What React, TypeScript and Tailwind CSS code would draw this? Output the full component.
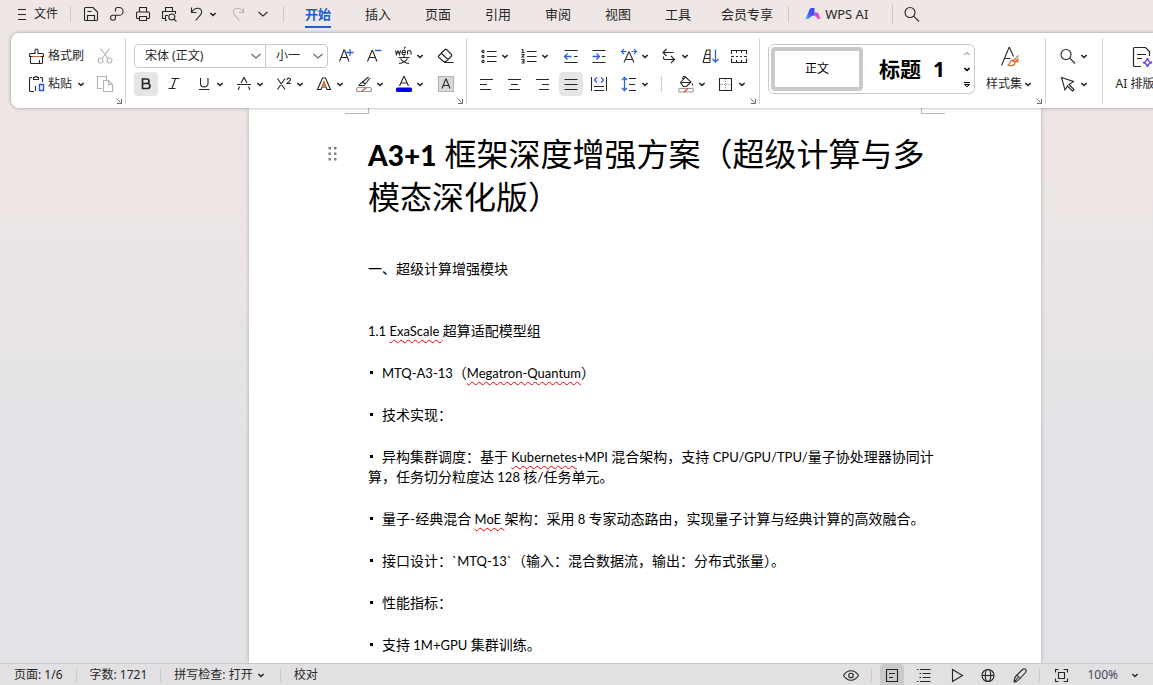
import type { ReactNode } from 'react';
import clsx from 'clsx';

const tabs = ['开始', '插入', '页面', '引用', '审阅', '视图', '工具', '会员专享'];

function Icon({ children, className = 'size-5' }: { children: ReactNode; className?: string }) {
    return (
        <svg viewBox="0 0 20 20" className={clsx('shrink-0', className)} fill="none" stroke="currentColor" strokeWidth="1.1" aria-hidden="true">
            {children}
        </svg>
    );
}

function Caret({ className = '' }: { className?: string }) {
    return (
        <svg viewBox="0 0 12 12" className={clsx('size-3 shrink-0', className)} fill="none" stroke="currentColor" strokeWidth="1.5" aria-hidden="true">
            <path d="M3.3 5L6 7.4 8.7 5" />
        </svg>
    );
}

function Chevron({ className = '' }: { className?: string }) {
    return (
        <svg viewBox="0 0 12 12" className={clsx('size-3 shrink-0', className)} fill="none" stroke="currentColor" strokeWidth="1.1" aria-hidden="true">
            <path d="M1.5 4L6 8l4.5-4" />
        </svg>
    );
}

type ToolProps = { label: string; children: ReactNode; menu?: boolean; active?: boolean; className?: string };

function Tool({ label, children, menu, active, className }: ToolProps) {
    return (
        <button
            aria-label={label}
            className={clsx(
                'flex h-6 shrink-0 items-center rounded',
                menu ? 'w-9 justify-end' : 'w-6 justify-center',
                active && 'bg-[#e5e5e5]',
                className,
            )}
        >
            <Icon>{children}</Icon>
            {menu && <Caret />}
        </button>
    );
}

function Group({ children, className, launcher }: { children: ReactNode; className?: string; launcher?: boolean }) {
    return (
        <section className={clsx('relative flex shrink-0 pt-[11px] after:absolute after:top-[5px] after:right-0 after:bottom-1 after:w-px after:bg-[#d4d4d4]', className)}>
            {children}
            {launcher && (
                <button aria-label="更多设置" className="absolute right-1 bottom-1">
                    <svg viewBox="0 0 6 6" className="size-[6px]" fill="none" stroke="#6b6b6b" aria-hidden="true">
                        <path d="M0.5 0.5l4 4M5.5 1v4.5H1" />
                    </svg>
                </button>
            )}
        </section>
    );
}

function Divider({ className = 'h-4' }: { className?: string }) {
    return <span className={clsx('w-px shrink-0 bg-[#cdc8c9]', className)} />;
}

function TitleBar() {
    return (
        <header className="flex h-[33px] shrink-0 items-start overflow-hidden whitespace-nowrap">
            <button className="flex h-7 w-[70px] shrink-0 items-center pl-3 text-xs">
                <Icon>
                    <path d="M6 5.5h8M6 10.5h8M6 15.5h8" />
                </Icon>
                <span className="ml-[2px]">文件</span>
            </button>
            <div className="flex h-7 items-center">
                <Divider />
                <button aria-label="保存" className="ml-[10px]">
                    <Icon>
                        <path d="M3.500 4.500a1 1 0 0 1 1-1h7.500l4.500 4.500v7.500a1 1 0 0 1-1 1h-11a1 1 0 0 1-1-1zM6.500 16.500v-5h7v5M6.500 7.500h4" />
                    </Icon>
                </button>
                <button aria-label="输出为PDF" className="ml-[6px]">
                    <Icon>
                        <path d="M8.500 7.500V5.500a2 2 0 0 1 2-2h1.700a3.900 3.900 0 0 1 0 7.800H6a2.500 2.500 0 1 0 2.500 2.500v-2.500" />
                    </Icon>
                </button>
                <button aria-label="打印" className="ml-[6px]">
                    <Icon>
                        <path d="M6.500 8V3.500h7V8M6.500 14.500h-2a1 1 0 0 1-1-1V9a1 1 0 0 1 1-1h11a1 1 0 0 1 1 1v4.500a1 1 0 0 1-1 1h-2M6.500 12.500h7v4h-7z" />
                    </Icon>
                </button>
                <button aria-label="打印预览" className="ml-[6px]">
                    <Icon>
                        <path d="M6.500 7.500v-4h7v4M6.500 14.500h-3v-7h13V10M8 16.500H6.500v-5H9" />
                        <circle cx="12.800" cy="13" r="3" />
                        <path d="M15 15.200l2.500 2.300" />
                    </Icon>
                </button>
                <button aria-label="撤销" className="ml-2 flex items-center">
                    <Icon>
                        <path d="M4.500 3.500v5H9.500M4.500 8.500c2-3.500 4.500-4.500 7-4.200 3.300.5 4.200 4 2 6.500L8.500 16.500" />
                    </Icon>
                    <Caret />
                </button>
                <button aria-label="恢复" className="ml-[9px] text-[#b9b3b4]">
                    <Icon>
                        <path d="M15.500 3.500v5H10.500M15.500 8.500c-2-3.500-4.500-4.500-7-4.200-3.300.5-4.200 4-2 6.500l5 5.700" />
                    </Icon>
                </button>
                <button aria-label="自定义快速访问工具栏" className="ml-[9px]">
                    <Chevron />
                </button>
                <Divider className="ml-[14px] h-4" />
            </div>
            <nav className="ml-[21px] flex h-7 gap-[34px] text-[13px]">
                {tabs.map((tab, i) => (
                    <a
                        key={tab}
                        href="#"
                        className={clsx(
                            'flex h-7 items-center border-b-2 pt-1',
                            i === 0 ? 'border-[#1a5fd0] font-bold text-[#1a5fd0]' : 'border-transparent',
                            i === 7 && '-ml-1',
                        )}
                    >
                        {tab}
                    </a>
                ))}
            </nav>
            <div className="flex h-7 items-center">
                <Divider className="ml-[15px] h-4" />
                <button className="ml-4 flex items-center gap-1 text-[13px]">
                    <svg viewBox="0 0 16 14" className="h-[14px] w-4" aria-hidden="true">
                        <defs>
                            <linearGradient id="aiLeft" x1="1" y1="0" x2="0" y2="1">
                                <stop offset="0" stopColor="#3b3df5" />
                                <stop offset="0.6" stopColor="#4c5cf8" />
                                <stop offset="1" stopColor="#35c8f5" />
                            </linearGradient>
                            <linearGradient id="aiRight" x1="0" y1="0" x2="1" y2="1">
                                <stop offset="0" stopColor="#8a4dff" />
                                <stop offset="0.6" stopColor="#f04fc4" />
                                <stop offset="1" stopColor="#ff8a6b" />
                            </linearGradient>
                        </defs>
                        <path d="M5 1.500Q5.500 1 6 1h3.500v7.500C6.500 8.500 5 10.500 3.500 12H.5z" fill="url(#aiLeft)" />
                        <path d="M9.500 5.500h2.500q1 0 1.300.8L15.800 12h-3.300Q11.500 9.500 9.500 8.800z" fill="url(#aiRight)" />
                    </svg>
                    <span className="pt-[2px]">WPS AI</span>
                </button>
                <Divider className="ml-6 h-5" />
                <button aria-label="搜索" className="ml-[9px]">
                    <Icon>
                        <circle cx="8" cy="8.500" r="5" />
                        <path d="M11.600 12.100l5.400 5.400" />
                    </Icon>
                </button>
            </div>
        </header>
    );
}

function ClipboardGroup() {
    return (
        <Group launcher className="w-[115px] flex-col gap-1 pl-4 text-xs">
            <div className="flex h-6 items-center">
                <button className="flex w-[68px] items-center gap-[1px]">
                    <Icon>
                        <path d="M3.500 10.500v6a1 1 0 0 0 1 1h10a1 1 0 0 0 1-1v-6M2.500 10.500v-2a1 1 0 0 1 1-1H8V4.500a1.500 1.500 0 0 1 3 0v3h4.500a1 1 0 0 1 1 1v2z" />
                        <path d="M5.500 10.500h8" stroke="#d4611e" />
                        <path d="M12.500 14v3.500" />
                    </Icon>
                    格式刷
                </button>
                <button aria-label="剪切" className="text-[#b3b3b3]">
                    <Icon>
                        <circle cx="5.500" cy="14.500" r="2.500" />
                        <circle cx="14.500" cy="14.500" r="2.500" />
                        <path d="M7 12.500L14.500 2.500M13 12.500L5.500 2.500" />
                    </Icon>
                </button>
            </div>
            <div className="flex h-6 items-center">
                <button className="flex w-[68px] items-center gap-[1px]">
                    <Icon>
                        <path d="M7 17.500H3.500a1 1 0 0 1-1-1V4.500a1 1 0 0 1 1-1H5M13 3.500h1.500a1 1 0 0 1 1 1V8M6.500 5.500v-2H8a1.200 1.200 0 0 1 2.400 0h1.100v2z" />
                        <path d="M12.500 10.500h4v6h-4z" stroke="#2153d6" strokeWidth="1.400" />
                        <path d="M8.500 12v5" />
                    </Icon>
                    粘贴
                    <Caret className="ml-[2px]" />
                </button>
                <button aria-label="复制" className="text-[#b3b3b3]">
                    <Icon>
                        <path d="M7 14.500H2.500v-12h9V6M8.500 6.500h5l4 4v7h-9zM13.500 6.500v4h4" />
                    </Icon>
                </button>
            </div>
        </Group>
    );
}

function FontGroup() {
    return (
        <Group launcher className="w-[341px] flex-col gap-1 px-2">
            <div className="flex h-6 items-center gap-1">
                <div className="mr-[2px] flex h-6 w-[194px] rounded border border-[#c9c9c9]">
                    <label className="relative flex flex-1 items-center">
                        <select aria-label="字体" className="h-full w-full appearance-none pl-[10px] text-xs outline-none">
                            <option>宋体 (正文)</option>
                        </select>
                        <Chevron className="pointer-events-none absolute right-[3px] text-[#666]" />
                    </label>
                    <label className="relative flex w-[62px] items-center border-l border-[#c9c9c9]">
                        <select aria-label="字号" className="h-full w-full appearance-none pl-[10px] text-xs outline-none">
                            <option>小一</option>
                        </select>
                        <Chevron className="pointer-events-none absolute right-[3px] text-[#666]" />
                    </label>
                </div>
                <Tool label="增大字号">
                    <path d="M3.500 15.500L8 4h.500L13 15.500M5 11.500h6.500" />
                    <path d="M14 3v7M10.500 6.500h7" stroke="#2a62e0" strokeWidth="1.300" />
                </Tool>
                <Tool label="减小字号">
                    <path d="M3.500 15.500L8 4.500h.500L13 15.500M5 11.500h6.500" />
                    <path d="M11 4.500h6.500" stroke="#2a62e0" strokeWidth="1.300" />
                </Tool>
                <Tool label="拼音指南" menu>
                    <path d="M1.500 4.500l1 4 1.500-3.500 1.500 3.500 1-4M8 6.500h3.500c0-3-3.500-3-3.500 0s2.500 2.500 3.500 1.500M10 2.500l1.500-1.500M13.500 8.500v-4M13.500 6c0-2 3.500-2 3.500 0v2.500" />
                    <path d="M4.500 11.500h11M10 9.500v2M6.500 12.500c1.500 2.500 4 4.500 8.500 5M13.500 12.500c-1.500 2.500-4 4.500-8.500 5" />
                </Tool>
                <Tool label="清除格式" className="ml-1">
                    <path d="M2.500 10L9 3.500c.5-.5 1-.5 1.500 0l5 5c.5.5.5 1 0 1.500L10 15.500H7.500L2.500 11c-.3-.3-.3-.7 0-1zM5.500 7.500l7 6.500M8 16.500h9.500" />
                </Tool>
            </div>
            <div className="flex h-6 items-center gap-1">
                <Tool label="加粗" active>
                    <path d="M6.500 5h4.300c3 0 3 4.500 0 4.500H6.500zM6.500 9.500h5c3.200 0 3.200 5 0 5h-5z" strokeWidth="1.700" />
                </Tool>
                <Tool label="倾斜">
                    <path d="M7.500 4.500h8M4.500 14.500h7M11.500 4.500l-3.500 10" />
                </Tool>
                <Tool label="下划线" menu>
                    <path d="M6.500 4v5.500c0 4.500 7.500 4.500 7.500 0V4M5 15.500h10.500" />
                </Tool>
                <Tool label="删除线" menu>
                    <path d="M7 9l3-5.500L13 9M5.500 12.500l-1.500 3.500M14.500 12.500l1.500 3.500M3 10.500h14" />
                </Tool>
                <Tool label="上标" menu>
                    <path d="M3.500 4.500l7.500 11M11 4.500l-7.500 11M13 6c0-2.500 3.500-2.500 3.500-.3 0 1.300-2.300 2-3.500 3.800h4" />
                </Tool>
                <Tool label="文字效果" menu>
                    <path d="M3.500 15.500L8.500 4h3l5 11.500h-3.500l-1-2.500H8l-1 2.500z" />
                    <path d="M10 7.500l1.500 4h-3z" stroke="#d4611e" fill="#f0a070" />
                </Tool>
                <Tool label="突出显示" menu>
                    <path d="M6.500 9.500l1.500-1L14.500 3M6.500 9.500L5 11.500h5l2-2.500 4-5M8 7.500l3.500 3" />
                    <rect x="2.500" y="13.500" width="15" height="4" rx="2" stroke="#999" />
                    <path d="M8 17l4-3" stroke="#e03c3c" />
                </Tool>
                <Tool label="字体颜色" menu>
                    <path d="M5.500 12L9.800 2.500h.400L14.500 12M7 9h6" />
                    <rect x="2" y="13.500" width="16" height="4.500" rx="1.500" fill="#0000f0" stroke="none" />
                </Tool>
                <Tool label="字符底纹" className="ml-1">
                    <rect x="2.500" y="2.500" width="15" height="15" fill="#d9d9d9" stroke="#b5b5b5" />
                    <path d="M6 14.500L9.800 5h.400L14 14.500M7.500 11.500h5" />
                </Tool>
            </div>
        </Group>
    );
}

function ParagraphGroup() {
    return (
        <Group launcher className="w-[293px] flex-col gap-1 px-2">
            <div className="flex h-6 items-center gap-1">
                <Tool label="项目符号" menu>
                    <path d="M8 5.500h9.500M8 10.500h9.500M8 15.500h9.500" />
                    <circle cx="4" cy="5.500" r="1.100" />
                    <circle cx="4" cy="10.500" r="1.100" />
                    <circle cx="4" cy="15.500" r="1.100" />
                </Tool>
                <Tool label="编号" menu>
                    <path d="M8 5.500h9.500M8 10.500h9.500M8 15.500h9.500M2.500 3.500h1.300v3M2.500 6.500h3M2.500 8.500h2.500l-2 2.500h2.500M2.500 13.500h2.500v3.500H2.500M3 15.300h2" />
                </Tool>
                <Tool label="减少缩进量" className="ml-1">
                    <path d="M3.500 4.500h13M13 10.500h3.500M3.500 16.500h13" />
                    <path d="M3.500 10.500h7M6.500 7.500l-3 3 3 3" stroke="#2a62e0" strokeWidth="1.300" />
                </Tool>
                <Tool label="增加缩进量">
                    <path d="M3.500 4.500h13M13 10.500h3.500M3.500 16.500h13" />
                    <path d="M3.500 10.500h7M7.500 7.500l3 3-3 3" stroke="#2a62e0" strokeWidth="1.300" />
                </Tool>
                <Tool label="中文版式" menu>
                    <path d="M5 16.500L9.800 6h.400L15 16.500M6.500 13.500h7" />
                    <path d="M2.500 5.500h5M5 3L2.500 5.500 5 8M17.500 5.500h-5M15 3l2.500 2.500L15 8" stroke="#2a62e0" />
                </Tool>
                <Tool label="换行" menu>
                    <path d="M7.500 3L4 6.500 7.500 10M4 6.500h10.500M4.500 10.500v1.500a1.500 1.500 0 0 0 1.500 1.500h9.500M12 10l3.500 3.500L12 17" />
                </Tool>
                <Tool label="排序" className="ml-1">
                    <path d="M2 16.500L5.500 4h3.500v12.500M4.500 8.500H9M3.500 12.500H9M2 16.500h7" />
                    <path d="M14.500 3.500v12.500M11.500 13l3 3 3-3" stroke="#2a62e0" strokeWidth="1.300" />
                </Tool>
                <Tool label="显示标尺">
                    <path d="M2.500 8V4.500h15V8M2.500 12.500v4h15v-4M2 10.500h3M7 10.500h2M11 10.500h2M15 10.500h3M7.500 4.500v2.500M12.500 4.500v2.500M7.500 16.500V14M12.500 16.500V14" />
                </Tool>
            </div>
            <div className="flex h-6 items-center gap-1">
                <Tool label="左对齐">
                    <path d="M3 5.500h13M3 10.500h7M3 15.500h11" />
                </Tool>
                <Tool label="居中对齐">
                    <path d="M3 5.500h13M6 10.500h7M4 15.500h11" />
                </Tool>
                <Tool label="右对齐">
                    <path d="M3 5.500h13M9 10.500h7M6 15.500h10" />
                </Tool>
                <Tool label="两端对齐" active>
                    <path d="M3.500 5.500h13M3.500 10.500h13M3.500 15.500h13" />
                </Tool>
                <Tool label="分散对齐">
                    <path d="M2.500 3v14M17.500 3v14M5 12.500h10M5 16.500h10" />
                    <path d="M8 3.500L5.500 6 8 8.500M12 3.500L14.500 6 12 8.500" stroke="#2a62e0" strokeWidth="1.300" />
                </Tool>
                <Tool label="行距" menu>
                    <path d="M10 4.500h7M10 10.500h6M10 16.500h7" />
                    <path d="M5.500 3.500v13M3 6l2.500-2.500L8 6M3 14l2.500 2.500L8 14" stroke="#2a62e0" strokeWidth="1.300" />
                </Tool>
                <Divider className="mx-[6px] h-4" />
                <Tool label="底纹颜色" menu>
                    <path d="M4.500 8.500L9.500 3l5.500 5-4.500 4.500h-3zM4.500 8.500H15M7 5.500c-1-3 1-4 2.500-2.500M16.500 9.500v2" />
                    <rect x="2.500" y="14.500" width="15" height="3.500" rx="1.700" stroke="#999" />
                    <path d="M8 18l4-3.500" stroke="#e03c3c" />
                </Tool>
                <Tool label="边框" menu>
                    <path d="M3.500 4.500h12v12h-12z" />
                    <path d="M9.500 5v11.500M4 10.500h11.500" stroke="#9a9a9a" strokeDasharray="1 1" />
                </Tool>
            </div>
        </Group>
    );
}

function StyleGroup() {
    return (
        <Group launcher className="w-[286px] items-start pl-2">
            <div className="flex h-[50px] w-[207px] rounded-md border border-[#c9c9c9] p-[2px] text-black">
                <button className="flex w-[92px] shrink-0 items-center justify-center rounded border-4 border-[#cacaca] text-xs">正文</button>
                <button className="flex flex-1 items-center justify-center gap-3 text-[21px] leading-none font-bold">
                    <span>标题</span>
                    <span>1</span>
                </button>
                <div className="flex w-[11px] shrink-0 flex-col items-center justify-between py-[1px]">
                    <button aria-label="上一行样式">
                        <Caret className="rotate-180 text-[#b5b5b5]" />
                    </button>
                    <button aria-label="下一行样式">
                        <Caret />
                    </button>
                    <button aria-label="展开样式">
                        <svg viewBox="0 0 12 12" className="size-3" fill="none" stroke="currentColor" aria-hidden="true">
                            <path d="M3 4.500h6M3.500 6.500L6 8.800l2.500-2.300z" />
                        </svg>
                    </button>
                </div>
            </div>
            <button className="ml-[11px] flex flex-col items-center gap-2 text-xs">
                <svg viewBox="0 0 20 24" className="h-6 w-5" fill="none" stroke="currentColor" strokeWidth="1.100" aria-hidden="true">
                    <path d="M1.500 21.500L9 3.500h.500l4 9M4.500 14.500h6" />
                    <path d="M18.500 11.500l-6 6M16.500 18.500l2-2M12.500 16c-3 0-1.500 3.500-4.500 5 3 1.500 7 .5 7-2.500zM18.500 14.500l-3.500 3.500" stroke="#d4611e" strokeWidth="1.200" />
                </svg>
                <span className="flex items-center leading-4">
                    样式集
                    <Caret />
                </span>
            </button>
        </Group>
    );
}

function FindGroup() {
    return (
        <Group className="w-[57px] flex-col gap-1 pl-2">
            <Tool label="查找" menu>
                <circle cx="8" cy="8.500" r="5" />
                <path d="M11.700 12.200l5.300 5.300" />
            </Tool>
            <Tool label="选择" menu>
                <path d="M3.500 3.500l12 4-4.500 3 5 5-1.500 1.500-5-5-2.500 4z" />
            </Tool>
        </Group>
    );
}

function Ribbon() {
    return (
        <div className="relative z-10 ml-[11px] flex h-[75px] shrink-0 overflow-hidden rounded-l-lg bg-white shadow-[0_0_3px_1px_#00000038]">
            <ClipboardGroup />
            <FontGroup />
            <ParagraphGroup />
            <StyleGroup />
            <FindGroup />
            <section className="flex shrink-0 pt-[11px] pl-3 text-xs">
                <button className="flex flex-col items-center gap-2 whitespace-nowrap">
                    <svg viewBox="0 0 24 24" className="ml-4 size-6" fill="none" stroke="currentColor" strokeWidth="1.200" aria-hidden="true">
                        <path d="M10 22.500H3.500a1 1 0 0 1-1-1v-17a1 1 0 0 1 1-1h11l4 4V12M6 10.500h9M6 14.500h5" />
                        <path d="M16.500 14c.5 3 1.500 4 4.500 4.500-3 .5-4 1.500-4.500 4.500-.5-3-1.500-4-4.500-4.500 3-.5 4-1.500 4.500-4.500z" stroke="#6a3df0" strokeWidth="1.500" />
                    </svg>
                    <span className="leading-4">AI 排版</span>
                </button>
            </section>
        </div>
    );
}

// Lato runs larger than the Chinese text around it, so Latin runs go one step smaller
function En({ children }: { children: ReactNode }) {
    return <span className="text-[13px]">{children}</span>;
}

function Misspelled({ children }: { children: ReactNode }) {
    return (
        <span className="text-[13px] underline decoration-red-600 decoration-wavy decoration-1 underline-offset-3">{children}</span>
    );
}

function Bullet({ children }: { children: ReactNode }) {
    return (
        <li>
            <span className="mr-[9px] ml-[2px] inline-block size-[3px] -translate-y-1 bg-black" />
            {children}
        </li>
    );
}

function Page() {
    return (
        <article className="h-full w-[792px] shrink-0 bg-white px-[119px] font-[Lato,'Noto_Sans_CJK_SC',sans-serif] text-sm leading-5 whitespace-nowrap text-black shadow-[0_0_4px_#00000040]">
            <div className="-mx-[23px] flex h-[6px] justify-between">
                <span className="w-6 border-r border-b border-[#b8b8b8]" />
                <span className="w-6 border-b border-l border-[#b8b8b8]" />
            </div>
            <div className="relative mt-[19px]">
                <button aria-label="段落选项" className="absolute top-[14px] -left-10">
                    <svg viewBox="0 0 9 14" className="h-[14px] w-[9px]" fill="#808080" aria-hidden="true">
                        <path d="M0.500 0h2.500v2.500H.5zM6 0h2.500v2.500H6zM.5 5.500h2.500v2.500H.5zM6 5.500h2.500v2.500H6zM.5 11h2.500v2.500H.5zM6 11h2.500v2.500H6z" />
                    </svg>
                </button>
                <h1 className="text-[32px] leading-[42px] font-normal">
                    <span className="mr-2 text-[28px] font-black">A3+1</span>
                    框架深度增强方案（超级计算与多
                    <br />
                    模态深化版）
                </h1>
            </div>
            <h2 className="mt-[41px]">一、超级计算增强模块</h2>
            <h3 className="mt-[42px]">
                <En>1.1 </En>
                <Misspelled>ExaScale </Misspelled>
                超算适配模型组
            </h3>
            <ul className="mt-[22px] flex flex-col gap-[22px]">
                <Bullet>
                    <En>MTQ-A3-13</En>（<Misspelled>Megatron-Quantum</Misspelled>）
                </Bullet>
                <Bullet>技术实现：</Bullet>
                <Bullet>
                    异构集群调度：基于<En> </En>
                    <Misspelled>Kubernetes</Misspelled>
                    <En>+MPI </En>混合架构，支持<En> CPU/GPU/TPU/</En>量子协处理器协同计
                    <br />
                    算，任务切分粒度达<En> 128 </En>核/任务单元。
                </Bullet>
                <Bullet>
                    量子-经典混合<En> </En>
                    <Misspelled>MoE </Misspelled>架构：采用<En> 8 </En>专家动态路由，实现量子计算与经典计算的高效融合。
                </Bullet>
                <Bullet>
                    接口设计：<En>`MTQ-13`</En>（输入：混合数据流，输出：分布式张量）。
                </Bullet>
                <Bullet>性能指标：</Bullet>
                <Bullet>
                    支持<En> 1M+GPU </En>集群训练。
                </Bullet>
            </ul>
        </article>
    );
}

function StatusBar() {
    return (
        <footer className="relative z-10 flex h-[22px] shrink-0 items-center justify-between border-t border-[#c9c7c9] bg-[#e3e0e3] text-xs whitespace-nowrap">
            <div className="flex items-center gap-[13px] pl-[14px]">
                <span>页面: 1/6</span>
                <Divider className="h-[14px]" />
                <span>字数: 1721</span>
                <Divider className="h-[14px]" />
                <button className="flex items-center gap-[2px]">
                    拼写检查: 打开
                    <Caret />
                </button>
                <Divider className="h-[14px]" />
                <button>校对</button>
            </div>
            <div className="flex h-full items-center pr-3">
                <button aria-label="护眼模式">
                    <Icon>
                        <path d="M2.500 10.500c4-6.300 11-6.300 15 0-4 6.300-11 6.300-15 0z" />
                        <circle cx="10" cy="10.500" r="2.300" />
                    </Icon>
                </button>
                <Divider className="mr-2 ml-[10px] h-[14px]" />
                <button aria-label="页面视图" className="flex h-full w-6 items-center justify-center rounded-t bg-[#cbc9cb]">
                    <Icon>
                        <path d="M4.500 4.500h11v12h-11zM7 8.500h6M7 12.500h4" />
                    </Icon>
                </button>
                <button aria-label="大纲视图" className="ml-[10px]">
                    <Icon>
                        <path d="M6 4.500h10.500M8.500 8.500h8M8.500 12.500h8M6 16.500h10.500M3 4.500h1.500M5.500 8.500H7M5.500 12.500H7M3 16.500h1.500" />
                    </Icon>
                </button>
                <button aria-label="阅读版式" className="ml-[13px]">
                    <Icon>
                        <path d="M5.500 4.500v12L15.500 10.500z" />
                    </Icon>
                </button>
                <button aria-label="Web版式" className="ml-[11px]">
                    <Icon>
                        <circle cx="10" cy="10.500" r="6" />
                        <ellipse cx="10" cy="10.500" rx="2.700" ry="6" />
                        <path d="M4 10.500h12" />
                    </Icon>
                </button>
                <button aria-label="写作模式" className="ml-3">
                    <Icon>
                        <path d="M4 17c0-3 .5-4.500 2-6l6.500-6.500c2.500-2 4.500.5 3 3L9.500 14c-1.500 1.800-3 3-5.500 3zM7 10l3 3.500M4 17l4-4.500" />
                    </Icon>
                </button>
                <Divider className="mr-[11px] ml-[9px] h-[14px]" />
                <button aria-label="最佳显示比例">
                    <Icon>
                        <path d="M4.500 7.500v-3h3M12.500 4.500h4v3M16.500 13.500v3h-4M7.500 16.500h-3v-3M7.500 7.500h6v6h-6z" />
                    </Icon>
                </button>
                <button className="ml-4 flex items-center gap-[11px] text-[#414a5c]">
                    100%
                    <Caret className="text-[#333]" />
                </button>
            </div>
        </footer>
    );
}

export default function App() {
    return (
        <div className="flex h-screen flex-col overflow-hidden bg-[linear-gradient(to_bottom,#efe7e5_0%,#ece5e5_35%,#e3e3e7_65%,#e3e2e6_100%)] font-['Noto_Sans','Noto_Sans_CJK_SC',sans-serif] text-[#262626]">
            <TitleBar />
            <Ribbon />
            <main className="flex min-h-0 flex-1 overflow-hidden pl-[249px]">
                <Page />
            </main>
            <StatusBar />
        </div>
    );
}
